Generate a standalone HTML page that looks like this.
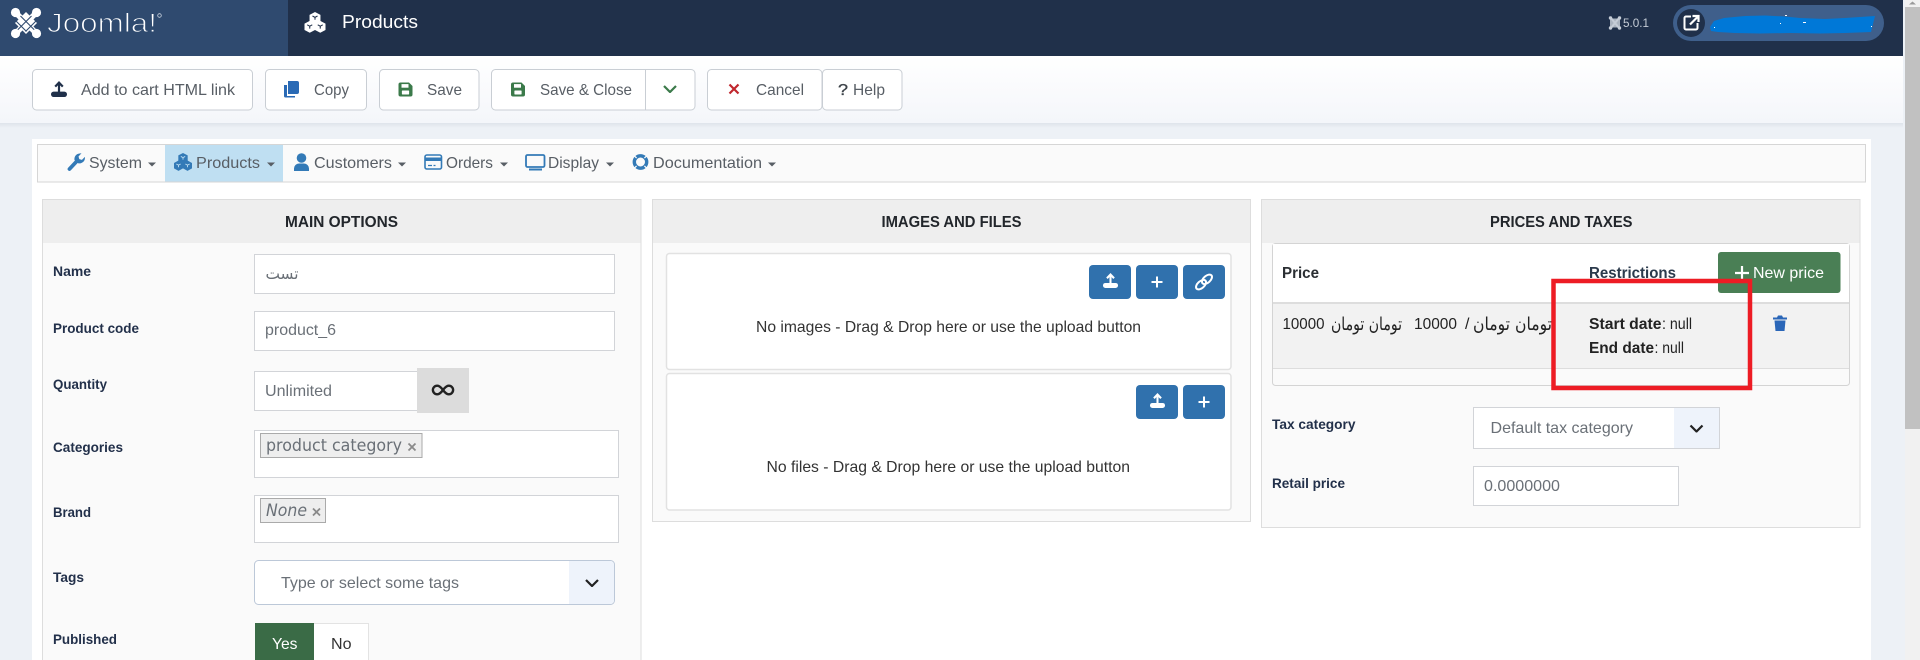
<!DOCTYPE html>
<html lang="en"><head><meta charset="utf-8"><title>Products</title>
<style>
html,body{margin:0;padding:0;background:#edf1f6;overflow:hidden;width:1920px;height:660px}
svg{display:block}
text{font-family:"Liberation Sans",sans-serif;font-size:16px;white-space:pre}
.b{font-weight:700}
.l{font-weight:700;font-size:14px;fill:#22304a}
.t{font-weight:700;fill:#22262b}
.g{fill:#585e65}
.n{fill:#585e65}
.i{fill:#6a7077}
.ar{font-family:"DejaVu Sans",sans-serif}
.box{fill:#fff;stroke:#d2d4d8}
.wbtn{fill:#fff;stroke:#c9ced4}
.bl{fill:#3071ad}
</style></head><body>
<svg xmlns="http://www.w3.org/2000/svg" width="1920" height="660" viewBox="0 0 1920 660">
<defs>
<linearGradient id="tb" x1="0" y1="0" x2="0" y2="1"><stop offset="0" stop-color="#fff"/><stop offset="1" stop-color="#f4f6fa"/></linearGradient>
<linearGradient id="sh" x1="0" y1="0" x2="0" y2="1"><stop offset="0" stop-color="#dfe4eb"/><stop offset="1" stop-color="#edf1f6"/></linearGradient>
<symbol id="up" viewBox="0 0 16 16"><path d="M8 1.800V11.500M4.200 5.600L8 1.600l3.800 4" fill="none" stroke="currentColor" stroke-width="2.200"/><rect x="0" y="10.600" width="16" height="5.400" rx="2.600" fill="currentColor"/></symbol>
<symbol id="cube" viewBox="0 0 20 20"><g fill="currentColor"><path d="M10 0l5.200 2.700v6L10 11.400 4.800 8.700v-6z"/><path d="M5 8.400l5 2.700v6l-5 2.700-5-2.700v-6z"/><path d="M15 8.400l5 2.700v6l-5 2.700-5-2.700v-6z"/></g><path d="M7.600 3.800L10 5.100l2.400-1.300M10 5.100V7.400M2.600 12.200L5 13.500l2.400-1.300M5 13.500v2.300M12.600 12.200L15 13.500l2.400-1.300M15 13.500v2.300" fill="none" stroke="var(--bk)" stroke-width="1"/></symbol>
<symbol id="fl" viewBox="0 0 14 14"><path d="M2 0H10.500L14 3.500V12a2 2 0 0 1-2 2H2a2 2 0 0 1-2-2V2a2 2 0 0 1 2-2z" fill="currentColor"/><rect x="3" y="1.600" width="7" height="3.600" fill="#fff"/><rect x="3.400" y="8" width="7.200" height="4" rx=".6" fill="#fff"/></symbol>
<symbol id="chev" viewBox="0 0 14 8"><path d="M1 1l6 6 6-6" fill="none" stroke="currentColor" stroke-width="2.200"/></symbol>
</defs>

<!-- page -->
<rect width="1920" height="660" fill="#edf1f6"/>
<rect x="1905" y="0" width="15" height="660" fill="#f1f1f1"/>
<rect x="1905" y="7" width="15" height="422" fill="#c1c1c1"/>
<path d="M1909 4.500l3.500-3 3.500 3z" fill="#9a9a9a"/>
<rect x="32" y="139" width="1839" height="521" fill="#fff"/>

<!-- header -->
<rect width="1903" height="56" fill="#20304a"/>
<rect width="288" height="56" fill="#2f4a6f"/>
<g>
<path d="M15 12L37 34M37 12L15 34" stroke="#fff" stroke-width="5.500"/>
<path d="M26 12L37 23 26 34 15 23Z" fill="#fff"/>
<path d="M20.500 16L35 30.500M31.500 16L17 30.500M16 21L26.500 31.500M36 21L25.500 31.500" stroke="#2f4a6f" stroke-width="1.100" fill="none"/>
<g fill="#fff"><circle cx="15.500" cy="12.500" r="4.600"/><circle cx="36.500" cy="12.500" r="4.600"/><circle cx="15.500" cy="33.500" r="4.600"/><circle cx="36.500" cy="33.500" r="4.600"/></g>
</g>
<text x="47" y="32" style="font-size:27px" fill="#fff" stroke="#2f4a6f" stroke-width="1" textLength="110" lengthAdjust="spacingAndGlyphs">Joomla!</text>
<circle cx="159.500" cy="15.500" r="1.800" fill="none" stroke="#c9d2de" stroke-width=".8"/>
<use href="#cube" x="304" y="12" width="22" height="21" color="#fff" style="--bk:#20304a"/>
<text x="342" y="28" style="font-size:18px" fill="#fff" textLength="76" lengthAdjust="spacingAndGlyphs">Products</text>

<path d="M1610 18.500h10v9h-10z" fill="#aab3bf"/>
<path d="M1611 18l8 10M1619 18l-8 10" stroke="#c5ccd6" stroke-width="2"/>
<g fill="#c5ccd6"><circle cx="1610.500" cy="18" r="1.700"/><circle cx="1619.500" cy="18" r="1.700"/><circle cx="1610.500" cy="28" r="1.700"/><circle cx="1619.500" cy="28" r="1.700"/></g>
<text x="1623" y="27" style="font-size:12px" fill="#c5ccd6" textLength="26" lengthAdjust="spacingAndGlyphs">5.0.1</text>
<rect x="1673" y="5" width="211" height="36" rx="18" fill="#3f5f8b"/>
<circle cx="1691" cy="23" r="14" fill="#20304a"/>
<path d="M1691 16.500h-5a1.500 1.500 0 0 0-1.500 1.500v10a1.500 1.500 0 0 0 1.500 1.500h10a1.500 1.500 0 0 0 1.500-1.500v-5" fill="none" stroke="#fff" stroke-width="2"/>
<path d="M1690 24.500l7.500-7.500M1692.500 16h6v6" fill="none" stroke="#fff" stroke-width="2.200"/>
<path d="M1710 27L1714 21 1724 18 1745 16 1765 15.500 1785 16.500 1800 18 1825 19 1845 18 1875 16 1873 24 1871 32 1845 33 1820 33.500 1790 33 1760 33.500 1735 33 1718 32 1711 31Z" fill="#0078d7"/>
<g fill="#fff"><rect x="1785" y="15" width="2" height="1"/><rect x="1780" y="23" width="1" height="1"/><rect x="1803" y="22" width="3" height="1"/><rect x="1714" y="27" width="1" height="1"/><rect x="1871" y="26" width="1" height="1"/></g>

<!-- toolbar -->
<rect x="0" y="123" width="1903" height="5" fill="url(#sh)"/>
<rect x="0" y="56" width="1903" height="67" fill="url(#tb)"/>
<g class="wbtn">
<rect x="32.500" y="69.500" width="220" height="40.500" rx="4"/>
<rect x="265.500" y="69.500" width="101" height="40.500" rx="4"/>
<rect x="379.500" y="69.500" width="99.500" height="40.500" rx="4"/>
<rect x="491.500" y="69.500" width="203.500" height="40.500" rx="4"/>
<rect x="707.500" y="69.500" width="114.500" height="40.500" rx="4"/>
<rect x="822.500" y="69.500" width="79.500" height="40.500" rx="4"/>
</g>
<path d="M645.500 70V110" stroke="#c9ced4"/>
<use href="#up" x="51" y="81" width="16" height="16" color="#20304a"/>
<g fill="#2a6ab5"><path d="M288 81h9a2 2 0 0 1 2 2v9a2 2 0 0 1-2 2h-9z"/><path d="M284 85h3v11h8v1.500h-9.500a1.500 1.500 0 0 1-1.500-1.500z"/></g>
<use href="#fl" x="398.500" y="82.500" width="14" height="14" color="#3b7a4a"/>
<use href="#fl" x="511" y="82.500" width="14" height="14" color="#3b7a4a"/>
<use href="#chev" x="663" y="85" width="14" height="8" color="#3b7a4a"/>
<path d="M729.500 84.500l9 9M738.500 84.500l-9 9" stroke="#c0272d" stroke-width="2.200"/>
<text x="81" y="95" class="g" textLength="154" lengthAdjust="spacingAndGlyphs">Add to cart HTML link</text>
<text x="314" y="95" class="g" textLength="35" lengthAdjust="spacingAndGlyphs">Copy</text>
<text x="427" y="95" class="g" textLength="35" lengthAdjust="spacingAndGlyphs">Save</text>
<text x="540" y="95" class="g" textLength="92" lengthAdjust="spacingAndGlyphs">Save &amp; Close</text>
<text x="756" y="95" class="g" textLength="48" lengthAdjust="spacingAndGlyphs">Cancel</text>
<text x="838" y="95" fill="#3c4248" stroke="#3c4248" stroke-width=".3" textLength="10" lengthAdjust="spacingAndGlyphs">?</text>
<text x="853" y="95" class="g" textLength="32" lengthAdjust="spacingAndGlyphs">Help</text>

<!-- nav -->
<rect x="37.500" y="144.500" width="1828" height="37.500" fill="#fafafa" stroke="#d6d6d6"/>
<rect x="165" y="145" width="118" height="36.500" fill="#bfdff2"/>
<g fill="#585e65">
<text x="89" y="168" class="n" textLength="53" lengthAdjust="spacingAndGlyphs">System</text>
<path d="M148 162.500h8l-4 4z"/>
<text x="196" y="168" class="n" textLength="64" lengthAdjust="spacingAndGlyphs">Products</text>
<path d="M267 162.500h8l-4 4z"/>
<text x="314" y="168" class="n" textLength="78" lengthAdjust="spacingAndGlyphs">Customers</text>
<path d="M398 162.500h8l-4 4z"/>
<text x="446" y="168" class="n" textLength="47" lengthAdjust="spacingAndGlyphs">Orders</text>
<path d="M500 162.500h8l-4 4z"/>
<text x="548" y="168" class="n" textLength="51" lengthAdjust="spacingAndGlyphs">Display</text>
<path d="M606 162.500h8l-4 4z"/>
<text x="653" y="168" class="n" textLength="109" lengthAdjust="spacingAndGlyphs">Documentation</text>
<path d="M768 162.500h8l-4 4z"/>
</g>
<g color="#337ab7">
<path d="M69.500 169L77 161" stroke="#337ab7" stroke-width="3.800" stroke-linecap="round"/>
<path d="M74.500 160a5.500 5.500 0 0 1 5-6.500l2-.3-3 3.300.8 2.600 2.600.8 3-3a5.500 5.500 0 0 1-6.800 6.300z" fill="#337ab7"/>
<use href="#cube" x="174" y="153" width="18" height="18" style="--bk:#bfdff2"/>
<circle cx="301.500" cy="158" r="4.800" fill="#337ab7"/>
<path d="M294 171v-2.500a5 5 0 0 1 5-5h5a5 5 0 0 1 5 5v2.500z" fill="#337ab7"/>
<rect x="425" y="155" width="16.500" height="14" rx="1.800" fill="none" stroke="#337ab7" stroke-width="1.600"/>
<rect x="425" y="157.500" width="16.500" height="3.500" fill="#337ab7"/>
<path d="M428 165.500h4M433.500 165.500h2" stroke="#337ab7" stroke-width="1.200"/>
<rect x="526" y="155" width="18.500" height="12" rx="1.500" fill="none" stroke="#337ab7" stroke-width="1.800"/>
<rect x="529" y="168.500" width="13" height="2" fill="#337ab7"/>
<circle cx="640.500" cy="162" r="6.200" fill="none" stroke="#337ab7" stroke-width="3.400"/>
<path d="M636.600 158.100l-2.400-2.400M644.400 158.100l2.400-2.400M636.600 165.900l-2.400 2.400M644.400 165.900l2.400 2.400" stroke="#fafafa" stroke-width="1.300"/>
</g>

<!-- MAIN OPTIONS -->
<rect x="42" y="199" width="599.500" height="461" fill="#fafafa"/>
<path d="M42.500 660V199.500H641V660" fill="none" stroke="#ddd"/>
<rect x="43" y="200" width="597.500" height="43" fill="#eee"/>
<text x="285" y="227" class="t" textLength="113" lengthAdjust="spacingAndGlyphs">MAIN OPTIONS</text>
<text x="53" y="276" class="l" textLength="38" lengthAdjust="spacingAndGlyphs">Name</text>
<text x="53" y="333" class="l" textLength="86" lengthAdjust="spacingAndGlyphs">Product code</text>
<text x="53" y="389" class="l" textLength="54" lengthAdjust="spacingAndGlyphs">Quantity</text>
<text x="53" y="452" class="l" textLength="70" lengthAdjust="spacingAndGlyphs">Categories</text>
<text x="53" y="517" class="l" textLength="38" lengthAdjust="spacingAndGlyphs">Brand</text>
<text x="53" y="582" class="l" textLength="31" lengthAdjust="spacingAndGlyphs">Tags</text>
<text x="53" y="644" class="l" textLength="64" lengthAdjust="spacingAndGlyphs">Published</text>

<rect class="box" x="254.500" y="254.500" width="360" height="39"/>
<text x="265.500" y="279" class="i ar" direction="ltr" textLength="33" lengthAdjust="spacingAndGlyphs">تست</text>
<rect class="box" x="254.500" y="311.500" width="360" height="39"/>
<text x="265" y="335" class="i" textLength="71" lengthAdjust="spacingAndGlyphs">product_6</text>
<rect class="box" x="254.500" y="371.500" width="163" height="39"/>
<text x="265" y="396" class="i" textLength="67" lengthAdjust="spacingAndGlyphs">Unlimited</text>
<rect x="417" y="368" width="52" height="45" fill="#dcdcdc"/>
<path d="M443 390c-2.200-3-4-4.300-5.800-4.300a4.300 4.300 0 0 0 0 8.600c1.800 0 3.600-1.300 5.800-4.300s4-4.300 5.800-4.300a4.300 4.300 0 0 1 0 8.600c-1.800 0-3.600-1.300-5.800-4.300z" fill="none" stroke="#222" stroke-width="2.400"/>

<rect class="box" x="254.500" y="430.500" width="364" height="47"/>
<rect x="260.500" y="433.500" width="161.500" height="24" fill="#eee" stroke="#aaa"/>
<text x="266" y="451" class="i" style="font-size:17px;font-family:'DejaVu Sans',sans-serif" textLength="136" lengthAdjust="spacingAndGlyphs">product category</text>
<path d="M408.500 443.500l7 7M415.500 443.500l-7 7" stroke="#8a8a8a" stroke-width="1.800"/>
<rect class="box" x="254.500" y="495.500" width="364" height="47"/>
<rect x="260.500" y="498.500" width="65" height="24" fill="#eee" stroke="#aaa"/>
<text x="266" y="516" class="i" style="font-size:17px;font-style:italic;font-family:'DejaVu Sans',sans-serif" textLength="41" lengthAdjust="spacingAndGlyphs">None</text>
<path d="M313 508.500l7 7M320 508.500l-7 7" stroke="#8a8a8a" stroke-width="1.800"/>

<rect x="254.500" y="560.500" width="360" height="44" rx="4" fill="#fff" stroke="#bcc8d8"/>
<path d="M569 561h41a4 4 0 0 1 4 4v35a4 4 0 0 1-4 4h-41z" fill="#eef3fb"/>
<text x="281" y="588" class="i" textLength="178" lengthAdjust="spacingAndGlyphs">Type or select some tags</text>
<use href="#chev" x="585" y="579" width="14" height="8" color="#222"/>

<path d="M255.500 660V623.500H368.500V660" fill="#fff" stroke="#e3e3e3"/>
<rect x="255" y="623" width="59" height="37" fill="#3a6b46"/>
<text x="272" y="649" fill="#fff" textLength="25.500" lengthAdjust="spacingAndGlyphs">Yes</text>
<text x="331" y="649" fill="#333" textLength="20.500" lengthAdjust="spacingAndGlyphs">No</text>

<!-- IMAGES AND FILES -->
<rect x="652.500" y="199.500" width="598" height="322" fill="#fafafa" stroke="#ddd"/>
<rect x="653" y="200" width="597" height="43" fill="#eee"/>
<text x="881.500" y="227" class="t" textLength="140" lengthAdjust="spacingAndGlyphs">IMAGES AND FILES</text>
<rect x="666.500" y="253.500" width="564.500" height="116" rx="3" fill="#fff" stroke="#e2e2e2" stroke-width="1.500"/>
<rect x="666.500" y="373.500" width="564.500" height="136.500" rx="3" fill="#fff" stroke="#e2e2e2" stroke-width="1.500"/>
<rect class="bl" x="1089" y="265" width="42" height="34" rx="4"/>
<rect class="bl" x="1136" y="265" width="42" height="34" rx="4"/>
<rect class="bl" x="1183" y="265" width="42" height="34" rx="4"/>
<rect class="bl" x="1136" y="385" width="42" height="34" rx="4"/>
<rect class="bl" x="1183" y="385" width="42" height="34" rx="4"/>
<use href="#up" x="1103" y="273" width="15" height="15" color="#fff"/>
<use href="#up" x="1150" y="393" width="15" height="15" color="#fff"/>
<path d="M1157 276.500v11M1151.500 282h11M1204 396.500v11M1198.500 402h11" stroke="#fff" stroke-width="2"/>
<g fill="none" stroke="#fff" stroke-width="2" transform="rotate(-42 1204 282)"><ellipse cx="1200" cy="282" rx="6" ry="3.400"/><ellipse cx="1208" cy="282" rx="6" ry="3.400"/></g>
<text x="756" y="332" fill="#333" textLength="385" lengthAdjust="spacingAndGlyphs">No images - Drag &amp; Drop here or use the upload button</text>
<text x="766.500" y="472" fill="#333" textLength="363.500" lengthAdjust="spacingAndGlyphs">No files - Drag &amp; Drop here or use the upload button</text>

<!-- PRICES AND TAXES -->
<rect x="1261.500" y="199.500" width="598.500" height="328" fill="#fafafa" stroke="#ddd"/>
<rect x="1262" y="200" width="597.500" height="43" fill="#eee"/>
<text x="1490" y="227" class="t" textLength="142.500" lengthAdjust="spacingAndGlyphs">PRICES AND TAXES</text>
<rect x="1272.500" y="243.500" width="577" height="142" rx="3" fill="#fafafa" stroke="#d4d4d4"/>
<rect x="1273" y="244" width="576" height="58" fill="#fff"/>
<rect x="1273" y="302" width="576" height="2" fill="#ddd"/>
<rect x="1273" y="304" width="576" height="64" fill="#f2f2f2"/>
<rect x="1273" y="368" width="576" height="1" fill="#ddd"/>
<text x="1282" y="278" class="b" fill="#2b2f33" textLength="37" lengthAdjust="spacingAndGlyphs">Price</text>
<text x="1589" y="278" class="b" fill="#2b3a4c" textLength="87" lengthAdjust="spacingAndGlyphs">Restrictions</text>
<rect x="1718" y="252" width="122.500" height="41" rx="3" fill="#4a7f55"/>
<path d="M1742 266v14M1735 273h14" stroke="#fff" stroke-width="2.200"/>
<text x="1753" y="278" fill="#fff" textLength="71" lengthAdjust="spacingAndGlyphs">New price</text>
<text x="1282.500" y="329" fill="#222" textLength="42" lengthAdjust="spacingAndGlyphs">10000</text>
<text x="1331" y="330" class="ar" style="font-size:18px" fill="#222" direction="ltr" textLength="71" lengthAdjust="spacingAndGlyphs">تومان تومان</text>
<text x="1414" y="329" fill="#222" textLength="43" lengthAdjust="spacingAndGlyphs">10000</text>
<text x="1465" y="329" fill="#222">/</text>
<text x="1473" y="330" class="ar" style="font-size:18px" fill="#222" direction="ltr" textLength="79" lengthAdjust="spacingAndGlyphs">تومان تومان</text>
<text x="1589" y="329" class="b" fill="#222" textLength="72.500" lengthAdjust="spacingAndGlyphs">Start date</text>
<text x="1662" y="329" fill="#222" textLength="30" lengthAdjust="spacingAndGlyphs">: null</text>
<text x="1589" y="353" class="b" fill="#222" textLength="65" lengthAdjust="spacingAndGlyphs">End date</text>
<text x="1654.500" y="353" fill="#222" textLength="29.500" lengthAdjust="spacingAndGlyphs">: null</text>
<path d="M1773 317.500h14v2h-14zM1777 317.500l1-2h4l1 2zM1774.500 320.500h11l-1 10.500h-9z" fill="#2a66b8"/>
<text x="1272" y="429" class="l" textLength="83.500" lengthAdjust="spacingAndGlyphs">Tax category</text>
<rect class="box" x="1473.500" y="407.500" width="246" height="41"/>
<rect x="1674" y="408" width="45" height="40" fill="#eef3fb"/>
<text x="1490.500" y="433" class="i" textLength="142.500" lengthAdjust="spacingAndGlyphs">Default tax category</text>
<use href="#chev" x="1689.500" y="424.500" width="14" height="8" color="#222"/>
<text x="1272" y="488" class="l" textLength="73" lengthAdjust="spacingAndGlyphs">Retail price</text>
<rect class="box" x="1473.500" y="466.500" width="205" height="39"/>
<text x="1484" y="491" class="i" textLength="76" lengthAdjust="spacingAndGlyphs">0.0000000</text>

<!-- annotation -->
<rect x="1553.500" y="281" width="196.500" height="107" fill="none" stroke="#ed1c24" stroke-width="4.500"/>
</svg>
</body></html>
